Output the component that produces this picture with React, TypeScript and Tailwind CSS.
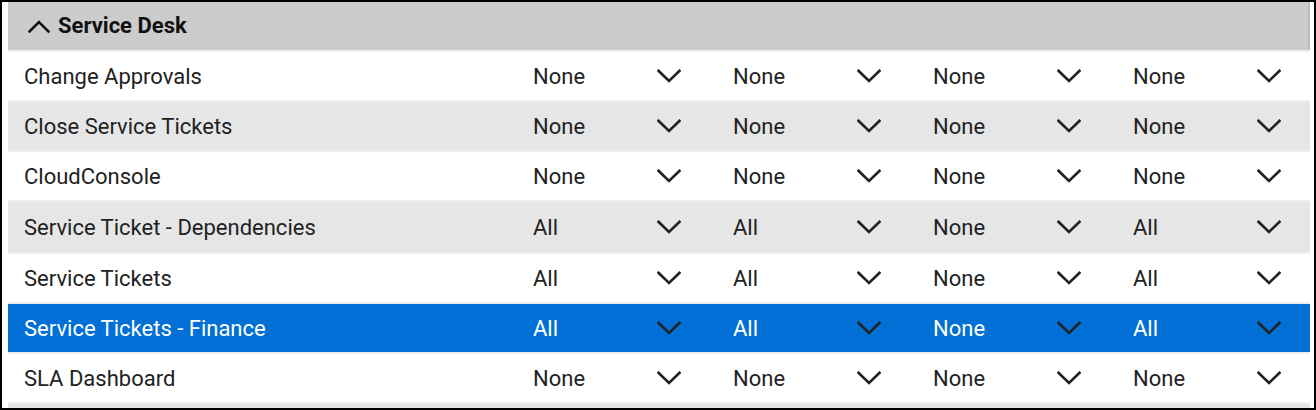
import React from 'react';

// Permission matrix rows for the Service Desk group
type Row = { name: string; values: string[]; tall?: boolean };

const ROWS: Row[] = [
  { name: 'Change Approvals', values: ['None', 'None', 'None', 'None'] },
  { name: 'Close Service Tickets', values: ['None', 'None', 'None', 'None'] },
  { name: 'CloudConsole', values: ['None', 'None', 'None', 'None'] },
  { name: 'Service Ticket - Dependencies', values: ['All', 'All', 'None', 'All'], tall: true },
  { name: 'Service Tickets', values: ['All', 'All', 'None', 'All'] },
  { name: 'Service Tickets - Finance', values: ['All', 'All', 'None', 'All'] },
  { name: 'SLA Dashboard', values: ['None', 'None', 'None', 'None'] },
];

const SELECTED = 5;

function ChevronDown() {
  return (
    <svg width="24" height="14" viewBox="0 0 24 14" fill="none" className="shrink-0">
      <path d="M1.5 1.8 L12 12 L22.5 1.8" stroke="#222222" strokeWidth="2.6" strokeLinecap="square" />
    </svg>
  );
}

function ChevronUp() {
  return (
    <svg width="22" height="14" viewBox="0 0 22 14" fill="none" className="shrink-0">
      <path d="M1.5 12.5 L11 3 L20.5 12.5" stroke="#111111" strokeWidth="2.6" strokeLinecap="square" />
    </svg>
  );
}

export default function App() {
  return (
    <div
      className="w-[1316px] h-[410px] border-2 border-black bg-white overflow-hidden pl-[6px] pr-[4px]"
      style={{ fontFamily: 'Roboto, "Liberation Sans", sans-serif' }}
    >
      {/* Group header */}
      <div className="h-[48px] bg-[#cccccc] border-r-2 border-[#bbbbbb] flex items-center pl-[20px] gap-[8px]">
        <ChevronUp />
        <span className="text-[22px] font-bold text-[#111111] leading-none">Service Desk</span>
      </div>

      {ROWS.map((row, i) => {
        const selected = i === SELECTED;
        const bg = selected ? 'bg-[#006fd6]' : i % 2 === 1 ? 'bg-[#e6e6e6]' : 'bg-white';
        const text = selected ? 'text-white' : 'text-[#222222]';
        return (
          <div key={row.name} className="border-t-2 border-[#eeeeee] overflow-hidden">
            <div className={`flex items-center ${row.tall ? 'h-[50px]' : 'h-[48px]'} ${bg} ${text}`}>
              <div className="w-[509px] shrink-0 pl-[16px] pt-[2px] text-[22px] leading-none">{row.name}</div>
              {row.values.map((v, j) => (
                <div key={j} className="w-[200px] shrink-0 flex items-center pl-[16px]">
                  <span className="w-[124px] pt-[2px] text-[22px] leading-none">{v}</span>
                  <ChevronDown />
                </div>
              ))}
            </div>
          </div>
        );
      })}

      {/* next row, scrolled out of view */}
      <div className="border-t-2 border-[#eeeeee] h-[48px] bg-[#e6e6e6]" />
    </div>
  );
}
